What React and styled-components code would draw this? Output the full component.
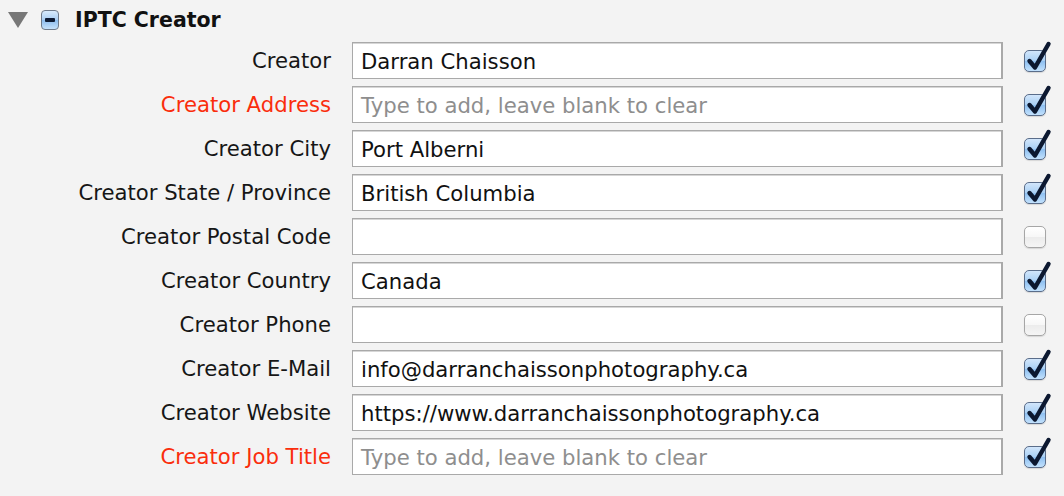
import styled, { createGlobalStyle } from "styled-components";

const GlobalStyle = createGlobalStyle`
  * { margin: 0; padding: 0; box-sizing: border-box; }
  html, body { background: #f3f3f3; }
  body {
    font-family: "DejaVu Sans", "Liberation Sans", sans-serif;
    color: #111;
    width: 1064px;
    height: 496px;
    overflow: hidden;
  }
`;

const Panel = styled.div`
  padding-top: 9px;
`;

const Header = styled.div`
  display: flex;
  align-items: center;
  height: 22px;
  padding-left: 8px;
`;

const Disclosure = styled.div`
  width: 0;
  height: 0;
  border-left: 10px solid transparent;
  border-right: 10px solid transparent;
  border-top: 16px solid #777;
  margin-right: 13px;
`;

const Collapse = styled.div`
  width: 18px;
  height: 20px;
  border-radius: 4px;
  border: 1px solid #6f7a8a;
  background: linear-gradient(#d9ebfd 0%, #a8cdf3 50%, #8cbcee 51%, #c6e2fc 100%);
  display: flex;
  align-items: center;
  justify-content: center;
  margin-right: 16px;

  &::after {
    content: "";
    width: 10px;
    height: 4px;
    border-radius: 1px;
    background: #0d1a33;
  }
`;

const Title = styled.h2`
  font-size: 20.5px;
  font-weight: bold;
  color: #111;
`;

const Rows = styled.div`
  display: grid;
  grid-template-columns: 331px 651px 22px;
  column-gap: 21px;
  row-gap: 7px;
  margin-top: 11px;
  align-items: center;
`;

const Label = styled.label`
  text-align: right;
  font-size: 21.2px;
  color: ${(p) => (p.$required ? "#fa2d0c" : "#161616")};
  white-space: nowrap;
`;

const Field = styled.div`
  height: 37px;
  border: 1px solid #a9a9a9;
  border-right-width: 2px;
  box-shadow: inset 0 1px 0 #d6d6d6;
  background: #fff;
  display: flex;
  align-items: center;
  padding-left: 8px;
  padding-top: 1px;
  font-size: 21.2px;
  color: ${(p) => (p.$placeholder ? "#8e8e8e" : "#111")};
  white-space: nowrap;
  overflow: hidden;
`;

const Check = styled.div`
  position: relative;
  width: 22px;
  height: 22px;
  border-radius: 5px;
  border: 1px solid ${(p) => (p.$on ? "#5a6d8a" : "#a6a6a6")};
  background: ${(p) =>
    p.$on
      ? "linear-gradient(#d2e6fb 0%, #a9d0f5 50%, #8ec0f1 52%, #c2e1fd 100%)"
      : "linear-gradient(#ffffff 0%, #f7f7f7 50%, #ececec 52%, #f5f5f5 100%)"};
  box-shadow: 0 1px 1px rgba(0, 0, 0, 0.12);
`;

const Tick = styled.svg`
  position: absolute;
  left: 1px;
  top: -10px;
  width: 26px;
  height: 30px;
  overflow: visible;
`;

const rows = [
  { label: "Creator", value: "Darran Chaisson", on: true },
  { label: "Creator Address", value: "", on: true, required: true },
  { label: "Creator City", value: "Port Alberni", on: true },
  { label: "Creator State / Province", value: "British Columbia", on: true },
  { label: "Creator Postal Code", value: "", on: false },
  { label: "Creator Country", value: "Canada", on: true },
  { label: "Creator Phone", value: "", on: false },
  { label: "Creator E-Mail", value: "info@darranchaissonphotography.ca", on: true },
  { label: "Creator Website", value: "https://www.darranchaissonphotography.ca", on: true },
  { label: "Creator Job Title", value: "", on: true, required: true },
];

function CheckBox({ on }) {
  return (
    <Check $on={on}>
      {on && (
        <Tick viewBox="0 0 26 30">
          <path
            d="M3.5 20 L9 26.5 L22.5 3"
            fill="none"
            stroke="#0c1830"
            strokeWidth="4.4"
            strokeLinecap="round"
            strokeLinejoin="round"
          />
        </Tick>
      )}
    </Check>
  );
}

function Row({ label, value, on, required }) {
  return (
    <>
      <Label $required={required}>{label}</Label>
      <Field $placeholder={!value && required}>
        {value || (required ? "Type to add, leave blank to clear" : "")}
      </Field>
      <CheckBox on={on} />
    </>
  );
}

export default function App() {
  return (
    <>
      <GlobalStyle />
      <Panel>
        <Header>
          <Disclosure />
          <Collapse />
          <Title>IPTC Creator</Title>
        </Header>
        <Rows>
          {rows.map((r) => (
            <Row key={r.label} {...r} />
          ))}
        </Rows>
      </Panel>
    </>
  );
}
